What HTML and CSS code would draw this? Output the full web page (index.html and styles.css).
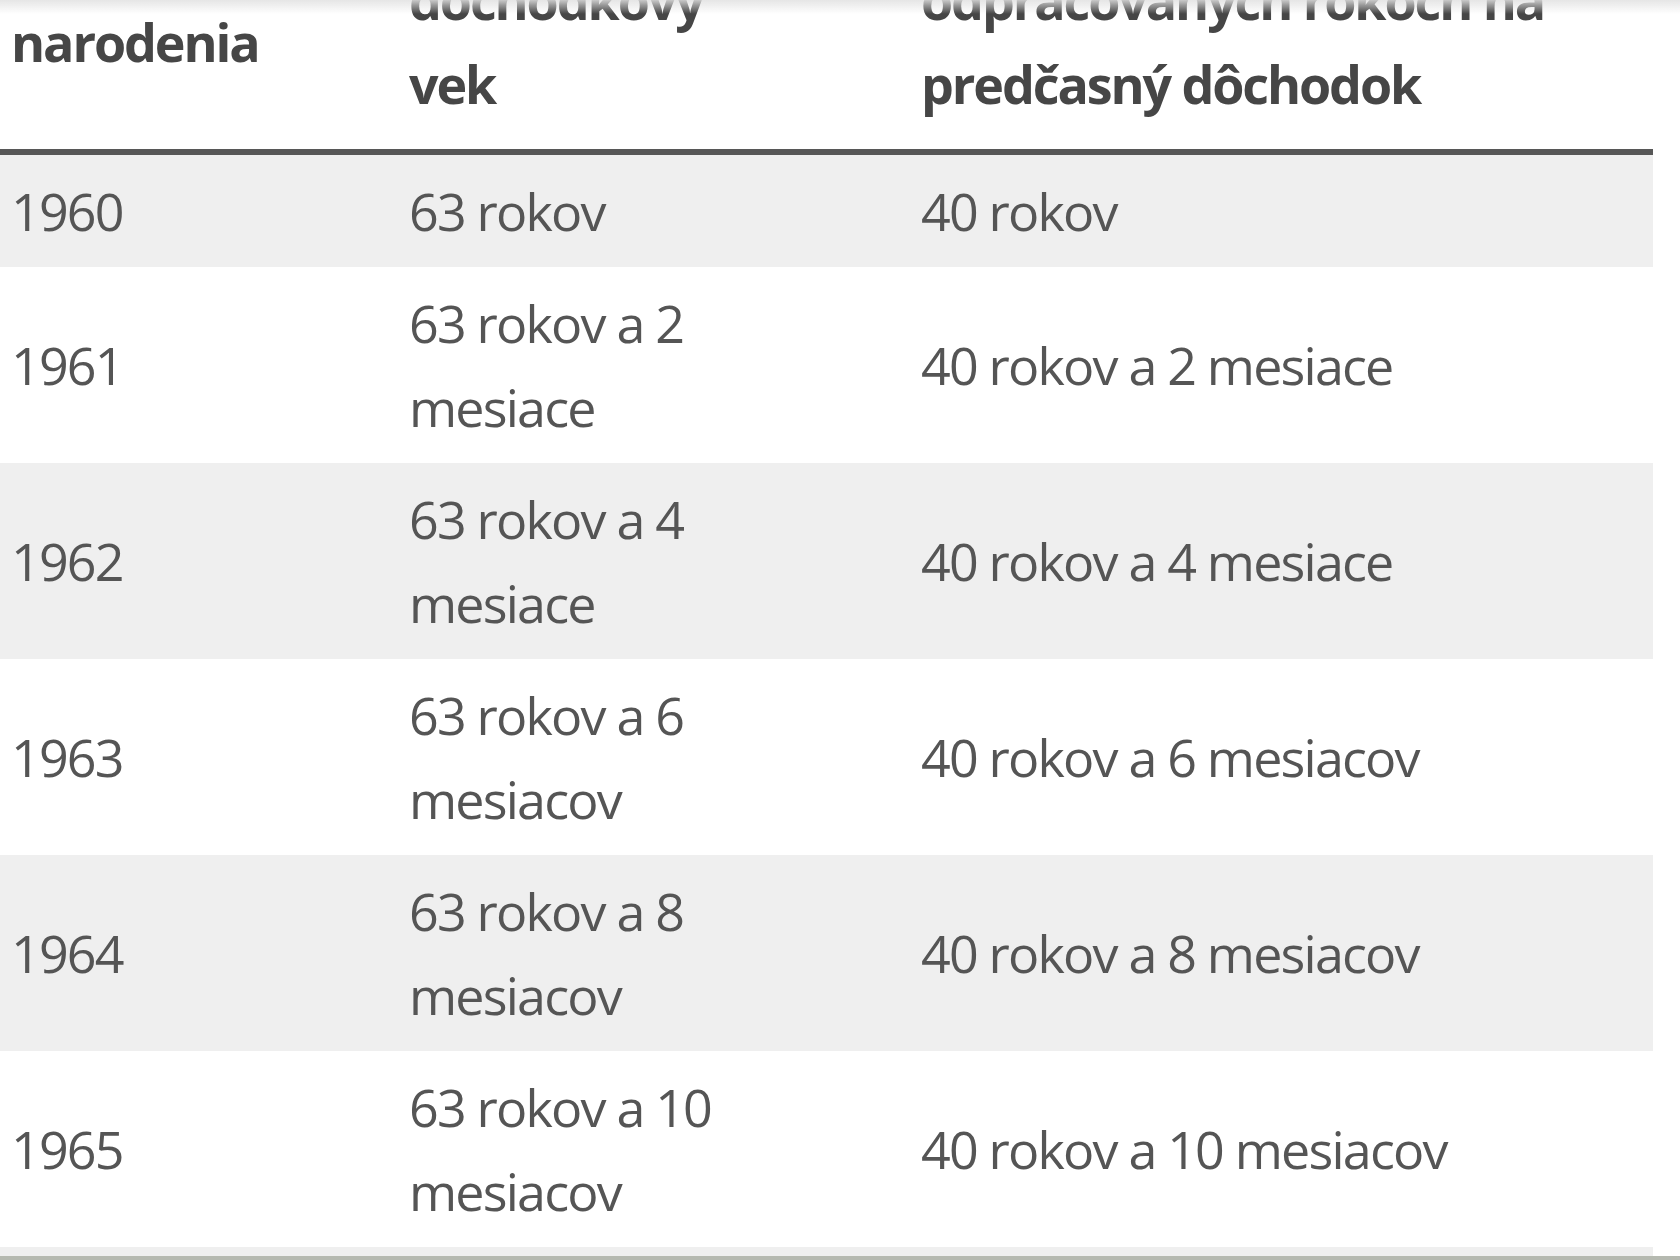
FILE: index.html
```html
<!DOCTYPE html>
<html lang="sk">
<head>
<meta charset="utf-8">
<title>Dôchodkový vek</title>
<link rel="stylesheet" href="styles.css">
</head>
<body>
<div class="top-shade"></div>
<main class="page">
  <table class="pension">
    <colgroup>
      <col class="c-year">
      <col class="c-age">
      <col class="c-work">
    </colgroup>
    <thead>
      <tr>
        <th>Rok<br>narodenia</th>
        <th>Predčasný<br>dôchodkový<br>vek</th>
        <th>Počet<br>odpracovaných rokoch na<br>predčasný dôchodok</th>
      </tr>
    </thead>
    <tbody>
      <tr><td>1960</td><td>63 rokov</td><td>40 rokov</td></tr>
      <tr><td>1961</td><td>63 rokov a 2 mesiace</td><td>40 rokov a 2 mesiace</td></tr>
      <tr><td>1962</td><td>63 rokov a 4 mesiace</td><td>40 rokov a 4 mesiace</td></tr>
      <tr><td>1963</td><td>63 rokov a 6 mesiacov</td><td>40 rokov a 6 mesiacov</td></tr>
      <tr><td>1964</td><td>63 rokov a 8 mesiacov</td><td>40 rokov a 8 mesiacov</td></tr>
      <tr><td>1965</td><td>63 rokov a 10 mesiacov</td><td>40 rokov a 10 mesiacov</td></tr>
      <tr><td>1966</td><td>64 rokov</td><td>41 rokov</td></tr>
    </tbody>
  </table>
</main>
<div class="bottom-bar"></div>
</body>
</html>
```
FILE: styles.css
```css
html, body {
  margin: 0;
  padding: 0;
  background: #ffffff;
  overflow: hidden;
}

body {
  font-family: "Open Sans", "Noto Sans", "Liberation Sans", sans-serif;
  color: #555555;
}

.page {
  width: 1653px;
  margin-top: -140px;
}

.pension {
  width: 1653px;
  table-layout: fixed;
  border-collapse: collapse;
  border-spacing: 0;
  font-size: 52px;
  line-height: 84px;
}

.c-year { width: 398px; }
.c-age { width: 512px; }
.c-work { width: 743px; }

.pension th {
  text-align: left;
  font-weight: 700;
  color: #464646;
  letter-spacing: -2.1px;
  vertical-align: middle;
  padding: 14px 9px 23px 11px;
  border-bottom: 6px solid #575757;
}

.pension td {
  vertical-align: middle;
  padding: 14px 9px 14px 11px;
  font-weight: 400;
  letter-spacing: -1.8px;
}

.pension td:nth-child(2) {
  padding-right: 110px;
}

.pension tbody tr:nth-child(odd) {
  background: #efefef;
}

.top-shade {
  position: fixed;
  top: 0;
  left: 0;
  right: 0;
  height: 14px;
  background: linear-gradient(to bottom, rgba(225, 225, 225, 0.85), rgba(255, 255, 255, 0));
  z-index: 2;
}

.bottom-bar {
  position: fixed;
  left: 0;
  right: 0;
  bottom: 0;
  height: 4px;
  background: #b5b9b0;
  z-index: 2;
}
```
